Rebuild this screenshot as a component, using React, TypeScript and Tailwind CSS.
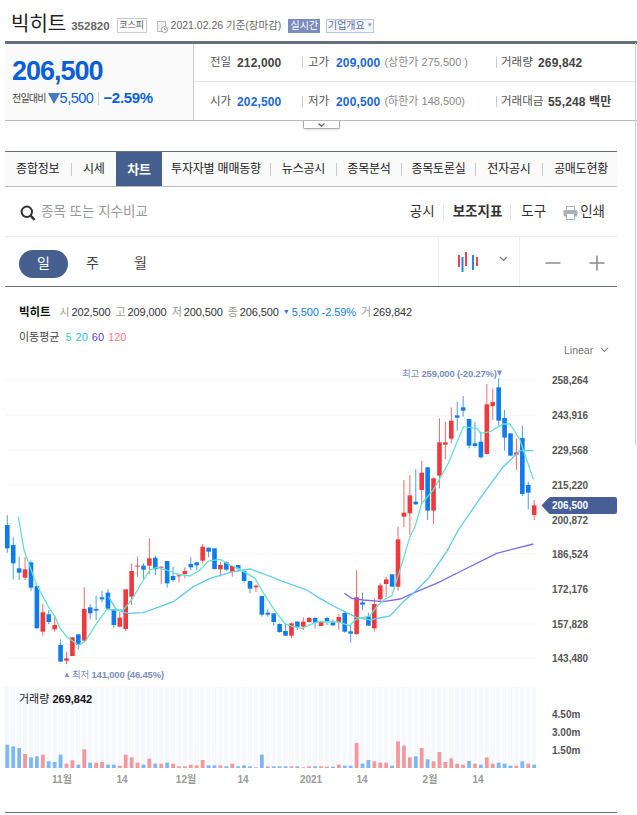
import React from "react";

type Candle = [number, number, number, number, number];

// red flag, wick top, body top, body bottom, wick bottom (read off the crops, 3x)
const left: Candle[] = [
  [0,45,75,145,158],[0,112,135,190,238],[0,170,205,218,240],[1,172,208,233,240],[0,182,187,263,272],
  [0,258,258,385,385],[1,312,337,395,408],[0,330,343,366,372],[1,345,375,388,395],[0,418,435,485,485],
  [1,455,475,482,492],[1,412,412,468,468],[0,403,403,435,448],[1,262,327,422,425],[0,312,322,340,358],
  [0,287,327,332,360],[0,272,292,298,307],[0,268,278,326,330],[0,326,327,375,385],[1,335,353,380,382],
  [1,268,268,387,393],[1,190,213,290,315],[1,170,197,200,230],[0,190,197,209,238],[1,115,175,197,223],
  [0,167,173,208,225],[1,200,200,202,253],[0,182,183,250,263],[0,200,228,240,245],[1,222,226,228,248],
  [1,202,213,222,235],[0,172,192,202,210],[0,185,187,196,210],[1,133,140,182,190],[0,143,143,155,172],
  [0,145,145,207,208],[1,185,195,208,230],[0,185,187,209,212],[1,197,198,215,230],[0,195,195,206,215],
  [0,213,213,243,248],[0,243,243,266,280],[1,253,257,262,276],[0,288,288,344,350],[0,327,338,344,350],
  [0,340,340,366,377],[0,370,372,396,398],[0,370,393,407,408],[1,367,370,407,415],[0,363,365,380,390],
  [1,352,365,380,390],[1,350,354,366,368],[0,352,354,368,385],[1,364,365,378,378],
];
const middle: Candle[] = [
  [0,290,294,303,315],[0,298,306,316,318],[1,282,291,306,330],[0,275,279,335,338],[0,315,334,341,368],
  [1,150,232,342,345],[0,218,247,254,270],[0,278,289,317,318],[1,235,252,325,335],[1,190,196,238,245],
  [1,170,178,192,230],[0,162,163,200,200],[1,20,58,200,212],
];
const right: Candle[] = [
  [1,360,458,470,501],[1,345,406,460,525],[0,328,425,433,435],[1,302,338,390,430],[0,322,322,452,480],
  [1,352,355,452,492],[1,175,247,347,385],[1,185,247,254,298],[1,142,182,236,250],[0,125,166,173,212],
  [0,108,142,152,170],[0,177,177,257,265],[0,185,250,258,262],[0,215,245,292,295],[1,72,133,282,283],
  [1,85,126,138,180],[0,55,82,182,197],[0,150,174,233,272],[0,220,220,287,288],[1,235,277,284,330],
  [0,197,234,402,408],[0,365,375,398,448],[1,420,436,465,480],
];

const toY = (base: number) => (c: Candle): Candle => [c[0], base + c[1] / 3, base + c[2] / 3, base + c[3] / 3, base + c[4] / 3];
const candles = [...left.map(toY(500)), ...middle.map(toY(520)), ...right.map(toY(360))];
const xAt = (i: number) => 7.3 + 5.92 * i;

// [red, height] in 3x crop pixels
const volumes: [number, number][] = [
  [0,70],[0,65],[0,60],[1,42],[0,32],[0,35],[1,40],[0,20],[0,18],[0,40],[1,13],[1,23],[0,10],[1,56],[0,16],
  [1,16],[1,18],[0,10],[0,10],[1,7],[1,40],[1,32],[1,16],[0,10],[1,28],[0,13],[1,13],[0,16],[1,13],[1,5],
  [1,5],[1,10],[1,8],[1,24],[0,8],[0,8],[1,8],[0,5],[1,13],[0,5],[0,8],[0,5],[1,2],[0,40],[1,5],
  [0,5],[0,5],[0,5],[1,5],[0,5],[1,2],[1,5],[0,5],[1,5],[1,4],[0,4],[1,10],[0,7],[0,7],[1,75],
  [0,13],[0,24],[1,20],[1,16],[1,16],[0,7],[1,80],[1,67],[1,32],[0,35],[1,60],[0,26],[1,20],[1,48],[1,18],
  [1,29],[1,13],[1,10],[0,21],[1,13],[0,10],[1,32],[1,13],[0,16],[0,13],[0,7],[1,7],[0,20],[1,13],[0,10],
];

const line = (x0: number, y0: number, p: number[][]) => p.map(([x, y]) => `${x0 + x / 3},${y0 + y / 3}`).join(" ");

const ma5 = [
  line(0, 500, [[55,50],[72,150],[90,200],[110,255],[145,320],[165,350],[180,385],[200,410],[235,435],[255,425],[290,370],[320,328],[345,330],[370,330],[395,300],[430,240],[450,210],[470,202],[500,210],[530,222],[570,228],[600,210],[625,183],[660,178],[690,195],[715,205],[765,235],[785,270],[820,325],[855,372],[880,380],[905,385],[945,368],[960,365]]),
  line(320, 520, [[20,306],[55,306],[88,317],[108,298],[150,288],[170,260],[195,237],[215,228],[240,150],[270,50]]),
  line(320, 360, [[285,500],[305,430],[340,390],[385,310],[430,200],[470,205],[482,220],[510,215],[550,192],[570,192],[600,240],[640,358]]),
].join(" ");
const ma20 = [
  line(0, 500, [[325,290],[350,330],[385,340],[430,338],[480,320],[520,305],[580,260],[630,235],[700,215],[750,207],[800,225],[850,245],[920,270],[960,295]]),
  line(320, 520, [[40,258],[80,278],[110,292],[150,300],[210,288],[250,245],[290,210],[325,175],[380,95]]),
  line(320, 360, [[415,510],[480,415],[550,320],[600,272],[640,272]]),
].join(" ");
const ma60 = line(320, 520, [[73,220],[95,235],[130,240],[190,245],[240,237],[290,215],[350,190],[430,150],[530,100],[640,72]]);

const priceAxis: [string, number][] = [
  ["258,264", 380], ["243,916", 415], ["229,568", 450], ["215,220", 485], ["200,872", 520],
  ["186,524", 554], ["172,176", 589], ["157,828", 624], ["143,480", 658],
];
const dateAxis: [string, number][] = [
  ["11월", 62], ["14", 122], ["12월", 186], ["14", 243], ["2021", 311], ["14", 362], ["2월", 430], ["14", 478],
];

const tabs = [
  { label: "종합정보", cell: "w-[66.5px]", text: "border-r border-[#ccc]" },
  { label: "시세", cell: "w-[44.5px]", text: "" },
  { label: "차트", cell: "w-[46px] bg-[#45608f] self-stretch", text: "font-bold text-white text-[13px]" },
  { label: "투자자별 매매동향", cell: "w-[109px]", text: "border-r border-[#ccc]" },
  { label: "뉴스공시", cell: "w-[66px]", text: "border-r border-[#ccc]" },
  { label: "종목분석", cell: "w-[65px]", text: "border-r border-[#ccc]" },
  { label: "종목토론실", cell: "w-[74px]", text: "border-r border-[#ccc]" },
  { label: "전자공시", cell: "w-[67px]", text: "border-r border-[#ccc]" },
  { label: "공매도현황", cell: "w-[74px] pl-[2px]", text: "" },
];

function Chart() {
  return (
    <svg width={637} height={452} viewBox="0 360 637 452" className="block">
      {priceAxis.map(([label, y]) =>
        label === "200,872" ? null : <line key={label} x1={6} x2={537} y1={y} y2={y} stroke="#f3f5f9" />
      )}
      {candles.map((c, i) => (
        <g key={i} fill={c[0] ? "#f0393d" : "#0f7cee"}>
          <rect x={xAt(i) - 0.5} y={c[1]} width={1} height={c[4] - c[1]} opacity={0.75} />
          <rect x={xAt(i) - 2.3} y={c[2]} width={4.6} height={Math.max(c[3] - c[2], 1)} />
        </g>
      ))}
      <polyline points={ma60} fill="none" stroke="#7e6ae6" strokeWidth={1.3} />
      <polyline points={ma20} fill="none" stroke="#5ccbe8" strokeWidth={1.3} />
      <polyline points={ma5} fill="none" stroke="#66e0cb" strokeWidth={1.3} />

      <text x={402} y={377} fontSize={9.5} letterSpacing={-0.2} fill="#7d8dbd">최고 <tspan fontWeight={700}>259,000 (-20.27%)</tspan></text>
      <polygon points="497,370.5 502,370.5 499.5,376" fill="#7d8dbd" />
      <polygon points="65,677 69,677 67,672" fill="#7d8dbd" />
      <text x={72} y={678} fontSize={9.5} letterSpacing={-0.2} fill="#7d8dbd">최저 <tspan fontWeight={700}>141,000 (46.45%)</tspan></text>

      {priceAxis.map(([label, y]) => (
        <text key={label} x={552} y={y + 3.5} fontSize={10} fontWeight={700} fill="#555">{label}</text>
      ))}
      <path d="M541.5 505.5 L548 498.5 Q549 497 551 497 L615 497 Q617 497 617 499 L617 512 Q617 514 615 514 L551 514 Q549 514 548 512.5 Z" fill="#475f96" />
      <text x={552} y={509} fontSize={10} fontWeight={700} fill="#fff">206,500</text>

      {volumes.map(([red, h], i) => (
        <g key={i}>
          <rect x={xAt(i) - 2.4} y={687} width={4.4} height={81} fill="#f6f8fd" />
          <rect x={xAt(i) - 1.9} y={768 - h / 3} width={3.8} height={h / 3} fill={red ? "#f4989c" : "#7cb8f6"} />
        </g>
      ))}
      <text x={19} y={703} fontSize={11} fill="#222">거래량 <tspan fontWeight={700} fill="#111">269,842</tspan></text>
      <text x={552} y={718} fontSize={10} fontWeight={700} fill="#555">4.50m</text>
      <text x={552} y={736} fontSize={10} fontWeight={700} fill="#555">3.00m</text>
      <text x={552} y={754} fontSize={10} fontWeight={700} fill="#555">1.50m</text>
      {dateAxis.map(([label, x], i) => (
        <text key={i} x={x} y={783} fontSize={10} fontWeight={700} fill="#999" textAnchor="middle">{label}</text>
      ))}
    </svg>
  );
}

export default function App() {
  return (
    <div className="relative w-[637px] h-[815px] overflow-hidden bg-white text-[#333] [font-family:'Liberation_Sans','Noto_Sans_CJK_KR',sans-serif]">
      {/* right edge of the page behind */}
      <div className="absolute left-[635px] top-[43px] h-[402px] w-px bg-[#ccc]" />

      {/* title */}
      <div className="flex h-[41px] items-center pl-[11px] pt-[10px]">
        <h1 className="mb-[4px] text-[20px] font-normal leading-none text-[#222]">빅히트</h1>
        <span className="ml-[5px] pt-[2px] text-[11.5px] font-bold text-[#666]">352820</span>
        <span className="ml-[7px] flex h-[15px] w-[30px] items-center justify-center border border-[#ccc] text-[9px] text-[#555]">코스피</span>
        <svg width={11} height={12} viewBox="0 0 11 12" className="ml-[10px] mt-[2px]">
          <rect x={0.5} y={0.5} width={8} height={10} fill="#f2f2f2" stroke="#bbb" />
          <circle cx={7.5} cy={8.5} r={3} fill="#fff" stroke="#999" />
          <path d="M7.5 7v1.5h1.5" fill="none" stroke="#999" strokeWidth={0.8} />
        </svg>
        <span className="ml-[3px] text-[10.5px] text-[#666]">2021.02.26 기준(장마감)</span>
        <span className="ml-[7px] flex h-[14px] w-[32px] items-center justify-center bg-[#7a8bbd] text-[10px] text-white">실시간</span>
        <span className="ml-[6px] flex h-[14px] w-[48px] items-center justify-center gap-[2px] border border-[#b8c4e0] bg-[#f4f6fb] text-[10px] text-[#5a6b9a]">
          기업개요<span className="text-[6px] text-[#99a]">▼</span>
        </span>
      </div>

      {/* price summary */}
      <div className="ml-[5px] flex h-[80px] border-t-[3px] border-b border-[#666e80] border-b-[#bbb]">
        <div className="flex w-[189px] flex-col border-r border-[#ccc] bg-[#fafafa] pl-[7px] pt-[12px]">
          <div className="text-[27px] font-bold leading-[30px] tracking-[-1px] text-[#0b5fd6]">206,500</div>
          <div className="mt-[2px] flex items-center">
            <span className="text-[10px] text-[#444] tracking-[-0.8px]">전일대비</span>
            <svg width={12} height={11} viewBox="0 0 12 11" className="ml-[2px]"><polygon points="0,0 12,0 6,11" fill="#4878c0" /></svg>
            <span className="text-[14.5px] leading-[20px] text-[#0b5fd6] tracking-[-0.5px]">5,500</span>
            <span className="ml-[5px] h-[13px] w-px bg-[#ccc]" />
            <span className="ml-[4px] text-[15px] font-bold leading-[20px] text-[#0b5fd6] tracking-[-0.3px]">−2.59%</span>
          </div>
        </div>
        <div className="grid flex-1 grid-cols-[108px_194px_1fr] grid-rows-2 text-[12px]">
          <Cell col={1} label="전일" value="212,000" />
          <Cell col={2} label="고가" value="209,000" blue limit="(상한가 275,500 )" />
          <Cell col={3} label="거래량" value="269,842" wide={37} />
          <Cell col={1} bottom label="시가" value="202,500" blue />
          <Cell col={2} bottom label="저가" value="200,500" blue limit="(하한가 148,500)" />
          <Cell col={3} bottom label="거래대금" value="55,248 백만" wide={47} />
        </div>
      </div>
      <div className="ml-[303px] flex h-[8px] w-[37px] items-center justify-center rounded-b-[2px] border border-t-0 border-[#aaa] shadow-sm">
        <svg width={7} height={4} viewBox="0 0 7 4"><path d="M0.5 0.5 3.5 3.2 6.5 0.5" fill="none" stroke="#556" strokeWidth={1.1} /></svg>
      </div>

      {/* tabs */}
      <div className="ml-[5px] mt-[22px] flex h-[36px] w-[612px] items-center border-y border-t-[#666e78] border-b-[#bbb] bg-[#fafafa] text-[12px] tracking-[-0.2px] text-[#222]">
        {tabs.map((t) => (
          <div key={t.label} className={`flex items-center ${t.cell}`}>
            <span className={`block w-full whitespace-nowrap text-center leading-[13px] ${t.text}`}>{t.label}</span>
          </div>
        ))}
      </div>

      {/* search and tools */}
      <div className="ml-[5px] flex h-[50px] w-[612px] items-center border-b border-[#e8e8e8] pl-[15px] pt-[2px] text-[13.5px] text-[#333]">
        <svg width={16} height={16} viewBox="0 0 16 16">
          <circle cx={6.8} cy={6.8} r={5.2} fill="none" stroke="#333" strokeWidth={2} />
          <path d="M10.6 10.6 14.6 14.8" stroke="#333" strokeWidth={2.4} />
        </svg>
        <span className="ml-[5px] text-[#999]">종목 또는 지수비교</span>
        <div className="ml-auto flex items-center pr-[12px]">
          <span>공시</span>
          <span className="mx-[8px] h-[16px] w-px bg-[#e4e4e4]" />
          <span className="ml-[1px] font-bold">보조지표</span>
          <span className="mx-[8px] h-[16px] w-px bg-[#e4e4e4]" />
          <span className="ml-[2px]">도구</span>
          <svg width={15} height={14} viewBox="0 0 15 14" className="ml-[17px]">
            <rect x={3.5} y={0.5} width={8} height={4} fill="none" stroke="#a8b0b8" />
            <rect x={0.5} y={4} width={14} height={6.5} rx={1.5} fill="#a8b0b8" />
            <rect x={3.5} y={7.5} width={8} height={6} fill="#fff" stroke="#a8b0b8" />
          </svg>
          <span className="ml-[2px]">인쇄</span>
        </div>
      </div>

      {/* period and zoom */}
      <div className="ml-[5px] flex h-[50px] w-[612px] items-center border-b border-[#666e78] pl-[14px] text-[14px] text-[#444]">
        <span className="mt-[4px] flex h-[28px] w-[49px] items-center justify-center rounded-full bg-[#45608f] text-white">일</span>
        <span className="ml-[18px] mt-[4px]">주</span>
        <span className="ml-[35px] mt-[4px]">월</span>
        <div className="ml-[291px] flex h-full w-[82px] items-center border-x border-[#eee] pl-[18px]">
          <svg width={21} height={20} viewBox="0 0 21 20">
            <rect x={1} y={3} width={2} height={12} fill="#ee4347" />
            <rect x={8} y={0} width={2} height={14} fill="#ee4347" />
            <rect x={19} y={5} width={2} height={9} fill="#ee4347" />
            <rect x={4.5} y={5} width={2} height={15} fill="#2a86ee" />
            <rect x={15} y={3} width={2} height={15} fill="#2a86ee" />
          </svg>
          <svg width={9} height={6} viewBox="0 0 9 6" className="ml-[21px] mb-[6px]"><path d="M1 1 4.5 4.5 8 1" fill="none" stroke="#777" strokeWidth={1.2} /></svg>
        </div>
        <svg width={16} height={16} viewBox="0 0 16 16" className="ml-[25px] mt-[2px]"><path d="M0.5 8H15.5" stroke="#888" strokeWidth={1.5} /></svg>
        <svg width={16} height={16} viewBox="0 0 16 16" className="ml-[28px] mt-[2px]"><path d="M0.5 8H15.5M8 0.5V15.5" stroke="#888" strokeWidth={1.5} /></svg>
      </div>

      {/* ohlc legend */}
      <div className="flex h-[73px] flex-col pl-[19px] pt-[18px] text-[11px] leading-[14px]">
        <div className="flex items-center whitespace-nowrap tracking-[-0.1px] text-[#333]">
          <b className="mr-[9px] text-[#111] text-[11.5px]">빅히트</b>
          <Ohlc k="시" v="202,500" />
          <Ohlc k="고" v="209,000" />
          <Ohlc k="저" v="200,500" />
          <Ohlc k="종" v="206,500" />
          <span className="ml-[-1px] text-[7px] text-[#0f7cee]">▼</span>
          <span className="ml-[2px] text-[#0f7cee]">5,500</span>
          <span className="ml-[3px] mr-[5px] text-[#0f7cee]">-2.59%</span>
          <Ohlc k="거" v="269,842" />
        </div>
        <div className="mt-[11px] flex items-center gap-[4px] whitespace-nowrap">
          <span className="mr-[2px] text-[#444]">이동평균</span>
          <span className="text-[#2fd5b8]">5</span>
          <span className="text-[#2fc0e8]">20</span>
          <span className="text-[#5a3fd6]">60</span>
          <span className="text-[#ff7a80]">120</span>
        </div>
        <div className="absolute left-[564px] top-[343px] flex items-center text-[10.5px] text-[#777]">
          Linear
          <svg width={9} height={6} viewBox="0 0 9 6" className="ml-[7px]"><path d="M1 1 4.5 4.5 8 1" fill="none" stroke="#888" strokeWidth={1.1} /></svg>
        </div>
      </div>

      <Chart />
      <div className="ml-[5px] w-[612px] border-t border-[#666e78]" />
    </div>
  );
}

function Ohlc({ k, v }: { k: string; v: string }) {
  return (
    <span className="mr-[5px] flex items-center gap-[2px]">
      <span className="text-[#999]">{k}</span>
      <span>{v}</span>
    </span>
  );
}

function Cell(props: { col: 1 | 2 | 3; label: string; value: string; blue?: boolean; limit?: string; bottom?: boolean; wide?: number }) {
  const { col, label, value, blue, limit, bottom, wide } = props;
  const pad = col === 1 ? "pl-[16px]" : col === 2 ? "pl-[6px]" : "pl-[5px]";
  const sep = col === 2 ? "ml-[-6px]" : "ml-[-5px]";
  return (
    <div className={`flex items-center whitespace-nowrap ${bottom ? "pt-[1px]" : "border-b border-[#e4e4e4]"} ${pad}`}>
      {col !== 1 && <span className={`absolute h-[11px] w-px bg-[#ccc] ${sep}`} />}
      <span className="text-[11.5px] text-[#555]" style={{ width: wide ?? (col === 1 ? 27 : 28) }}>{label}</span>
      <span className={`font-bold tracking-[0.15px] ${blue ? "text-[#1a68d8]" : "text-[#444]"}`}>{value}</span>
      {limit && <span className="ml-[4px] text-[11px] text-[#888]">{limit}</span>}
    </div>
  );
}
